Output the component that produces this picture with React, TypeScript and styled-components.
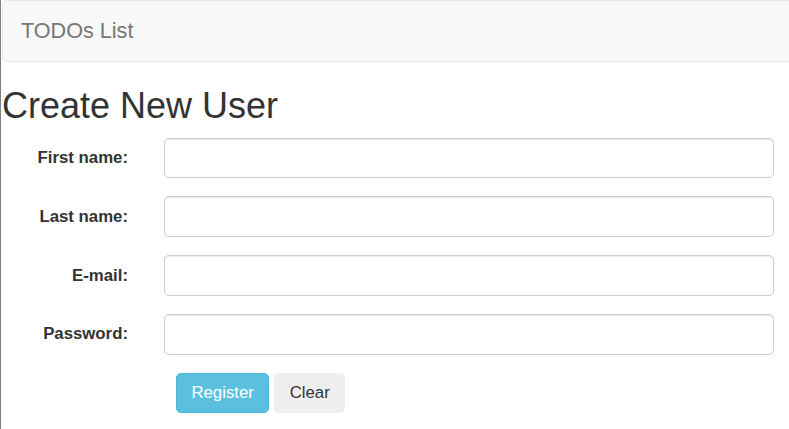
import React from "react";
import styled, { createGlobalStyle } from "styled-components";

const GlobalStyle = createGlobalStyle`
  html, body {
    margin: 0;
    padding: 0;
    background: #ffffff;
    font-family: "Liberation Sans", Arial, Helvetica, sans-serif;
    color: #333333;
  }
  * { box-sizing: border-box; }
`;

const Page = styled.div`
  min-height: 429px;
  border-left: 1px solid #808080;
  padding-left: 1px;
  overflow: hidden;
`;

const Navbar = styled.nav`
  height: 62px;
  margin: 0 -10px 24px 0;
  background: #f8f8f8;
  border: 1px solid #e7e7e7;
  border-radius: 5px;
  display: flex;
  align-items: center;
  padding: 0 18px;
`;

const Brand = styled.a`
  font-size: 21.6px;
  line-height: 24px;
  color: #777777;
  text-decoration: none;
`;

const Title = styled.h1`
  margin: 0 0 12px;
  font-size: 36px;
  font-weight: 500;
  line-height: 39.6px;
  color: #333333;
`;

const Form = styled.form`
  display: flex;
  flex-direction: column;
  gap: 18px;
`;

const Row = styled.div`
  display: flex;
  align-items: center;
`;

const Label = styled.label`
  width: 144px;
  padding-right: 18px;
  text-align: right;
  font-size: 16.8px;
  font-weight: bold;
  color: #333333;
`;

const Input = styled.input`
  margin-left: 18px;
  width: 610px;
  height: 40.8px;
  padding: 7.2px 14.4px;
  font-family: inherit;
  font-size: 16.8px;
  color: #555555;
  background: #ffffff;
  border: 1px solid #cccccc;
  border-radius: 4.8px;
  box-shadow: inset 0 1px 1px rgba(0, 0, 0, 0.075);
  outline: none;
`;

const Actions = styled.div`
  display: flex;
  gap: 5px;
  margin-left: 174px;
`;

const Button = styled.button<{ $variant: "info" | "plain" }>`
  font-family: inherit;
  font-size: 16.8px;
  line-height: 24px;
  padding: 7.2px 14.4px;
  border-radius: 4.8px;
  cursor: pointer;
  border: 1px solid ${(p) => (p.$variant === "info" ? "#46b8da" : "#efefef")};
  background: ${(p) => (p.$variant === "info" ? "#5bc0de" : "#efefef")};
  color: ${(p) => (p.$variant === "info" ? "#ffffff" : "#333333")};
`;

const fields = [
  { id: "first", label: "First name:", type: "text" },
  { id: "last", label: "Last name:", type: "text" },
  { id: "email", label: "E-mail:", type: "email" },
  { id: "password", label: "Password:", type: "password" },
];

export default function App() {
  return (
    <>
      <GlobalStyle />
      <Page>
        <Navbar>
          <Brand href="#">TODOs List</Brand>
        </Navbar>
        <Title>Create New User</Title>
        <Form onSubmit={(e) => e.preventDefault()}>
          {fields.map((f) => (
            <Row key={f.id}>
              <Label htmlFor={f.id}>{f.label}</Label>
              <Input id={f.id} type={f.type} />
            </Row>
          ))}
          <Actions>
            <Button type="submit" $variant="info">Register</Button>
            <Button type="reset" $variant="plain">Clear</Button>
          </Actions>
        </Form>
      </Page>
    </>
  );
}
